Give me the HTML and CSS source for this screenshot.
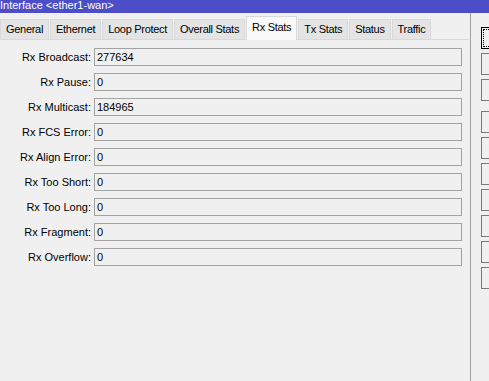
FILE: index.html
```html
<!DOCTYPE html>
<html>
<head>
<meta charset="utf-8" />
<title>Interface &lt;ether1-wan&gt;</title>
<link rel="stylesheet" href="styles.css">
</head>
<body>
	<div class="titlebar">Interface &lt;ether1-wan&gt;</div>
	<div class="window">
		<div class="main">
			<div class="tabs">
				<span class="tab">General</span>
				<span class="tab">Ethernet</span>
				<span class="tab">Loop Protect</span>
				<span class="tab">Overall Stats</span>
				<span class="tab active">Rx Stats</span>
				<span class="tab">Tx Stats</span>
				<span class="tab">Status</span>
				<span class="tab">Traffic</span>
			</div>
			<div class="panel">
				<div class="form">
					<label>Rx Broadcast:</label><div class="field">277634</div>
					<label>Rx Pause:</label><div class="field">0</div>
					<label>Rx Multicast:</label><div class="field">184965</div>
					<label>Rx FCS Error:</label><div class="field">0</div>
					<label>Rx Align Error:</label><div class="field">0</div>
					<label>Rx Too Short:</label><div class="field">0</div>
					<label>Rx Too Long:</label><div class="field">0</div>
					<label>Rx Fragment:</label><div class="field">0</div>
					<label>Rx Overflow:</label><div class="field">0</div>
				</div>
			</div>
		</div>
		<div class="buttons">
			<div class="btn focus"></div>
			<div class="btn"></div>
			<div class="btn"></div>
			<div class="btn sep"></div>
			<div class="btn"></div>
			<div class="btn"></div>
			<div class="btn"></div>
			<div class="btn"></div>
			<div class="btn"></div>
			<div class="btn"></div>
		</div>
	</div>
</body>
</html>
```

FILE: styles.css
```css
* {
	margin: 0;
	padding: 0;
	box-sizing: border-box;
}
html,body {
	width: 100%;
	height: 100%;
	overflow: hidden;
}
body {
	background: #f0f0f0;
	font-family: "Liberation Sans", Arial, sans-serif;
	font-size: 11px;
	color: #000;
}
.titlebar {
	height: 13px;
	line-height: 11px;
	background: #4b4ec6;
	color: #fff;
	white-space: nowrap;
}
.window {
	display: flex;
	height: 368px;
}
.main {
	flex: 0 0 471px;
	border-right: 1px solid #a0a0a0;
	display: flex;
	flex-direction: column;
}
.tabs {
	display: flex;
	align-items: flex-end;
	height: 26px;
	padding-top: 3px;
	position: relative;
	z-index: 1;
}
.tab {
	height: 20px;
	line-height: 19px;
	padding: 0 5px;
	margin-right: 1px;
	background: #e4e4e4;
	border: 1px solid #d9d9d9;
	border-bottom: none;
	letter-spacing: -0.3px;
	white-space: nowrap;
}
.tab.active {
	height: 24px;
	line-height: 20px;
	margin-bottom: -1px;
	background: #f9f9f9;
	padding: 0 5px;
}
.panel {
	flex: 1;
	border-top: 1px solid #d9d9d9;
	margin-right: 1px;
	padding-top: 8px;
}
.form {
	display: grid;
	grid-template-columns: 91px 368px;
	grid-auto-rows: 18px;
	column-gap: 3px;
	row-gap: 7px;
}
.form label {
	text-align: right;
	line-height: 18px;
	white-space: nowrap;
}
.field {
	border: 1px solid #a3a3a3;
	background: #f0f0f0;
	padding-left: 2px;
	line-height: 16px;
}
.buttons {
	flex: 1;
	min-width: 0;
	overflow: hidden;
	padding-left: 10px;
	padding-top: 14px;
	display: flex;
	flex-direction: column;
	gap: 4px;
}
.btn {
	flex: 0 0 22px;
	width: 30px;
	border: 1px solid #7a7a7a;
	background: #f0f0f0;
}
.btn.focus {
	border-color: #000;
	outline: 1px dotted #000;
	outline-offset: -3px;
}
.btn.sep {
	margin-top: 6px;
}
```
